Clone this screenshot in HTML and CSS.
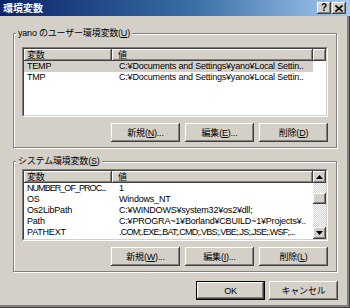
FILE: index.html
```html
<!DOCTYPE html>
<html lang="ja">
<head>
<meta charset="utf-8">
<title>環境変数</title>
<link rel="stylesheet" href="styles.css">
</head>
<body>
<div class="window">
  <div class="titlebar">
    <span class="title">環境変数</span>
    <div class="tbtns">
      <span class="tbtn help">?</span>
      <span class="tbtn close"><svg width="8" height="7" viewBox="0 0 8 7"><path d="M0.5 0.5 L7.5 6.5 M7.5 0.5 L0.5 6.5" stroke="#000" stroke-width="1.6"/></svg></span>
    </div>
  </div>
  <div class="content">
    <fieldset class="group g1">
      <legend>yano のユーザー環境変数(<u>U</u>)</legend>
      <div class="list l1">
        <div class="lv">
          <div class="main">
            <div class="hdr"><span class="hc c1">変数</span><span class="hc c2">値</span><span class="hc rest"></span></div>
            <div class="row sel"><span class="c1">TEMP</span><span class="c2">C:¥Documents and Settings¥yano¥Local Settin..</span></div>
            <div class="row"><span class="c1">TMP</span><span class="c2">C:¥Documents and Settings¥yano¥Local Settin..</span></div>
          </div>
        </div>
      </div>
      <div class="btns">
        <button class="btn">新規(<u>N</u>)...</button>
        <button class="btn">編集(<u>E</u>)...</button>
        <button class="btn">削除(<u>D</u>)</button>
      </div>
    </fieldset>
    <fieldset class="group g2">
      <legend>システム環境変数(<u>S</u>)</legend>
      <div class="list l2">
        <div class="lv">
          <div class="main">
            <div class="hdr"><span class="hc c1">変数</span><span class="hc c2 grow">値</span></div>
            <div class="row"><span class="c1 tight">NUMBER_OF_PROC...</span><span class="c2">1</span></div>
            <div class="row"><span class="c1">OS</span><span class="c2">Windows_NT</span></div>
            <div class="row"><span class="c1">Os2LibPath</span><span class="c2">C:¥WINDOWS¥system32¥os2¥dll;</span></div>
            <div class="row"><span class="c1">Path</span><span class="c2">C:¥PROGRA~1¥Borland¥CBUILD~1¥Projects¥..</span></div>
            <div class="row"><span class="c1">PATHEXT</span><span class="c2 tight2">.COM;.EXE;.BAT;.CMD;.VBS;.VBE;.JS;.JSE;.WSF;...</span></div>
          </div>
          <div class="vscroll">
            <span class="sbtn"><svg width="7" height="4" viewBox="0 0 7 4"><polygon points="3.5,0 7,4 0,4" fill="#000"/></svg></span>
            <div class="track"><span class="thumb"></span></div>
            <span class="sbtn"><svg width="7" height="4" viewBox="0 0 7 4"><polygon points="0,0 7,0 3.5,4" fill="#000"/></svg></span>
          </div>
        </div>
      </div>
      <div class="btns">
        <button class="btn">新規(<u>W</u>)...</button>
        <button class="btn">編集(<u>I</u>)...</button>
        <button class="btn">削除(<u>L</u>)</button>
      </div>
    </fieldset>
    <div class="dlg-btns">
      <button class="btn default">OK</button>
      <button class="btn">キャンセル</button>
    </div>
  </div>
</div>
</body>
</html>
```
FILE: styles.css
```css
* { box-sizing: border-box; }
html, body { margin: 0; padding: 0; }
body {
  width: 350px;
  height: 308px;
  overflow: hidden;
  background: #d4d0c8;
  font-family: "Liberation Sans", "Noto Sans CJK JP", sans-serif;
  font-size: 9px;
  letter-spacing: -0.2px;
  color: #000;
}
.window {
  width: 350px;
  height: 308px;
  background: #d4d0c8;
  box-shadow: inset -1px -1px #404040, inset -3px -3px #808080;
}
.titlebar {
  height: 16px;
  display: flex;
  align-items: center;
  justify-content: space-between;
  padding: 0 4px 0 3px;
  background: linear-gradient(to right, #0a246a 0%, #3a6ea5 55%, #a6caf0 100%);
}
.title {
  color: #fff;
  font-weight: bold;
  font-size: 10px;
  letter-spacing: 0;
  font-family: "Noto Sans CJK JP", sans-serif;
  line-height: 12px;
}
.tbtns { display: flex; gap: 1px; }
.tbtn {
  width: 14px;
  height: 12px;
  background: #d4d0c8;
  box-shadow: inset -1px -1px #404040, inset 1px 1px #fff, inset -2px -2px #808080;
  display: flex;
  align-items: center;
  justify-content: center;
  font-weight: bold;
  font-size: 10px;
  line-height: 10px;
  letter-spacing: 0;
}
.content { padding: 11px 0 0 13px; }
.group {
  width: 324px;
  margin: 0;
  padding: 8px 8px 5px 8px;
  border: 1px solid #808080;
  min-inline-size: 0;
  box-shadow: inset 1px 1px #fff, 1px 1px #fff;
}
.group legend {
  padding: 0 2px;
  margin-left: -6px;
  line-height: 12px;
  background: #d4d0c8;
}
.g2 { margin-top: 7px; padding-top: 2px; }
.list {
  border: 1px solid;
  border-color: #808080 #fff #fff #808080;
}
.l1 { height: 70px; }
.l2 { height: 72px; }
.lv {
  height: 100%;
  border: 1px solid;
  border-color: #404040 #d4d0c8 #d4d0c8 #404040;
  background: #fff;
  display: flex;
  overflow: hidden;
}
.main { flex: 1; min-width: 0; }
.hdr { display: flex; height: 12px; }
.hc {
  background: #d4d0c8;
  box-shadow: inset -1px -1px #404040, inset 1px 1px #fff, inset -2px -2px #808080;
  line-height: 12px;
  height: 12px;
  white-space: nowrap;
}
.c1 { width: 88px; padding-left: 3px; flex: none; overflow: hidden; white-space: nowrap; }
.c2 { width: 201px; padding-left: 7px; flex: none; overflow: hidden; white-space: nowrap; }
.hc.c2 { padding-left: 6px; }
.hc.rest { flex: 1; }
.hc.grow { flex: 1; width: auto; }
.tight { letter-spacing: -0.95px; }
.tight2 { letter-spacing: -0.75px; }
.row { display: flex; height: 11px; line-height: 11px; width: 289px; }
.row.sel { background: #d4d0c8; }
.vscroll {
  width: 13px;
  flex: none;
  display: flex;
  flex-direction: column;
}
.sbtn {
  height: 12px;
  flex: none;
  background: #d4d0c8;
  box-shadow: inset -1px -1px #404040, inset 1px 1px #fff, inset -2px -2px #808080;
  display: flex;
  align-items: center;
  justify-content: center;
}
.track {
  flex: 1;
  background: repeating-conic-gradient(#d4d0c8 0 25%, #fff 0 50%) 0 0 / 2px 2px;
  padding-top: 10px;
}
.thumb {
  display: block;
  height: 11px;
  background: #d4d0c8;
  box-shadow: inset -1px -1px #404040, inset 1px 1px #fff, inset -2px -2px #808080;
}
.btns {
  display: flex;
  justify-content: flex-end;
  gap: 5px;
  margin-top: 6px;
}
.btn {
  width: 69px;
  height: 19px;
  padding: 0;
  border: none;
  background: #d4d0c8;
  box-shadow: inset -1px -1px #404040, inset 1px 1px #fff, inset -2px -2px #808080;
  font: inherit;
  letter-spacing: inherit;
  color: #000;
}
.btn.default {
  box-shadow: inset 0 0 0 1px #000, inset -2px -2px #404040, inset 2px 2px #fff, inset -3px -3px #808080;
}
.dlg-btns {
  display: flex;
  justify-content: flex-end;
  gap: 4px;
  padding-right: 12px;
  margin-top: 9px;
}
```
